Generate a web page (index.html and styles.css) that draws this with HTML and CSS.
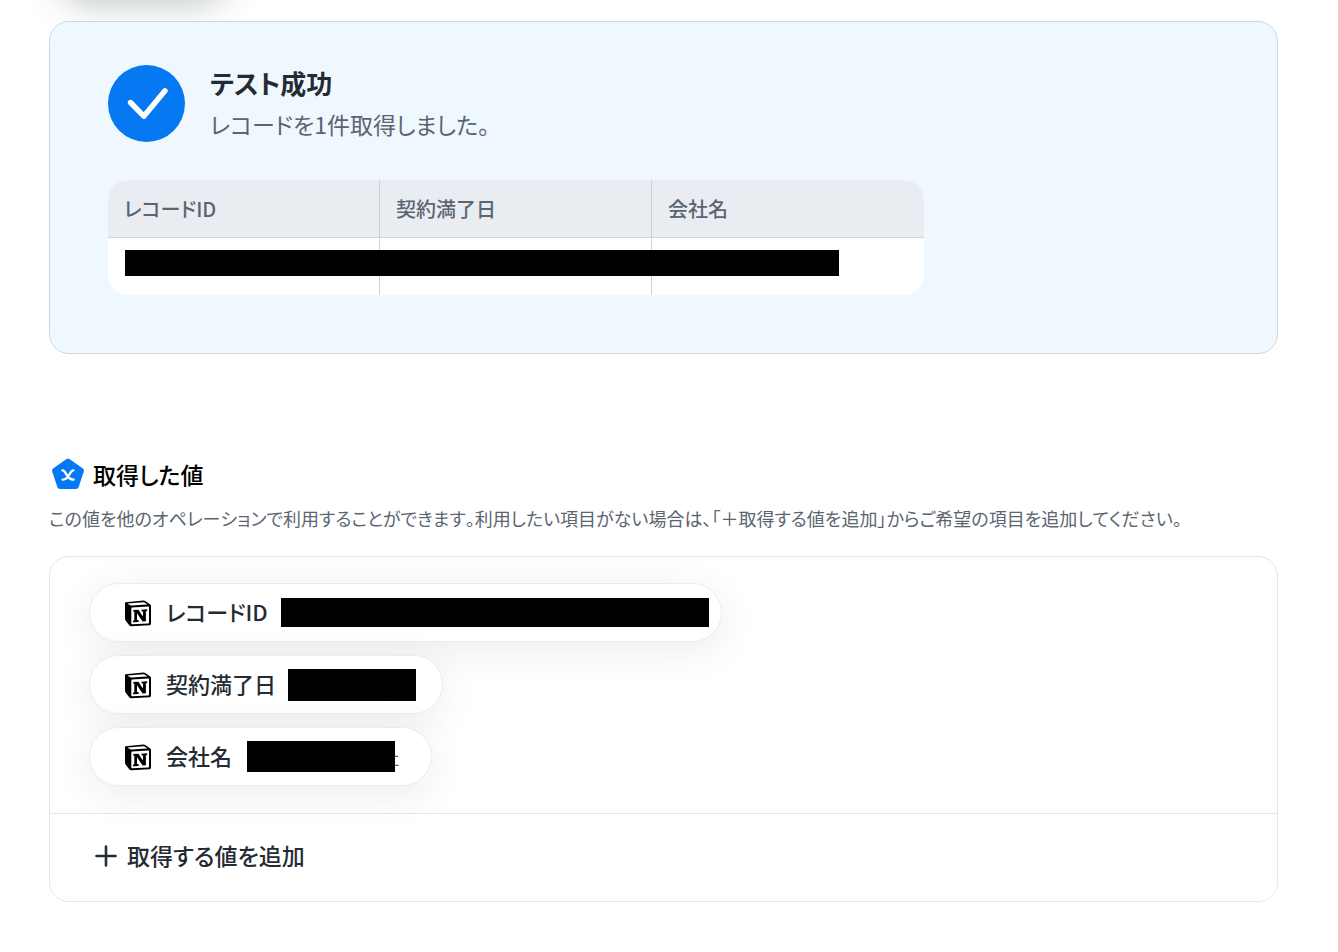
FILE: index.html
```html
<!DOCTYPE html>
<html lang="ja">
<head>
    <meta charset="UTF-8">
    <meta name="viewport" content="width=device-width, initial-scale=1.0">
    <title>テスト成功</title>
    <link rel="stylesheet" href="styles.css">
</head>
<body>
    <svg class="sprite" width="0" height="0" aria-hidden="true">
        <symbol id="notion" viewBox="0 0 28 28">
            <path d="M1.5 3.2 L19.5 1.6 Q20.6 1.5 21.6 2.2 L26.3 5.6 Q27 6.1 27 7 V24.6 Q27 26.2 25.4 26.3 L7.4 27.3 Q6 27.4 5.2 26.3 L1.8 21.8 Q1 20.8 1 19.6 V4.6 Q1 3.3 2.2 3.1 Z" fill="#000"/>
            <path d="M3.4 4.6 L19.3 3.3 Q20 3.2 20.6 3.6 L23.4 5.5 L7.4 6.5 Q6.5 6.6 5.8 6.1 Z" fill="#fff"/>
            <path d="M7.3 9.2 Q7.3 8.5 8 8.5 L24.3 7.5 Q25 7.5 25 8.2 V23.6 Q25 24.3 24.3 24.4 L8.1 25.3 Q7.3 25.3 7.3 24.6 Z" fill="#fff"/>
            <path d="M9.3 11.1 L14.4 10.8 L19 17.6 V12.6 L17.4 12.2 V10.7 L23.2 10.3 V11.8 L21.9 12.3 V22.2 L18.6 22.5 L13 14.2 V21.1 L14.7 21.5 V22.9 L9 23.2 V21.8 L10.3 21.3 V12.8 L9.3 12.5 Z" fill="#000"/>
        </symbol>
    </svg>

    <div class="page">
        <div class="tab-shadow"></div>

        <section class="result">
            <div class="result-head">
                <svg class="check" viewBox="0 0 77 77" aria-hidden="true">
                    <circle cx="38.5" cy="38.5" r="38.5" fill="#0578f2"/>
                    <path d="M22.5 37.5 L35.8 51.2 L57 25.8" fill="none" stroke="#fff" stroke-width="5.4" stroke-linecap="round" stroke-linejoin="round"/>
                </svg>
                <div>
                    <h1>テスト成功</h1>
                    <p class="message">レコードを1件取得しました。</p>
                </div>
            </div>
            <div class="table-wrap">
                <table>
                    <thead>
                        <tr><th>レコードID</th><th>契約満了日</th><th>会社名</th></tr>
                    </thead>
                    <tbody>
                        <tr><td></td><td></td><td></td></tr>
                    </tbody>
                </table>
                <div class="mask row-mask"></div>
            </div>
        </section>

        <section class="values">
            <h2>
                <svg class="logo" viewBox="0 0 34 34" aria-hidden="true">
                    <path d="M17 4 L30.5 13.5 L25.2 29.5 H8.8 L3.5 13.5 Z" fill="#0578f2" stroke="#0578f2" stroke-width="5" stroke-linejoin="round"/>
                    <path d="M11.4 13.4 C15.4 13 15 23 22.6 22.6 M22.4 13.4 C18.6 13 18.4 23 11.6 22.6" fill="none" stroke="#fff" stroke-width="2.4" stroke-linecap="round"/>
                </svg>
                取得した値
            </h2>
            <p class="note">この値を他のオペレーションで利用することができます。利用したい項目がない場合は、「＋取得する値を追加」からご希望の項目を追加してください。</p>

            <div class="panel">
                <ul class="pills">
                    <li class="pill pill-id">
                        <svg class="notion" aria-hidden="true"><use href="#notion"/></svg>
                        <span class="label">レコードID</span>
                        <span class="mask id-mask"></span>
                    </li>
                    <li class="pill pill-date">
                        <svg class="notion" aria-hidden="true"><use href="#notion"/></svg>
                        <span class="label">契約満了日</span>
                        <span class="mask date-mask"></span>
                    </li>
                    <li class="pill pill-company">
                        <svg class="notion" aria-hidden="true"><use href="#notion"/></svg>
                        <span class="label">会社名</span>
                        <span class="mask company-mask"></span>
                        <span class="value">社</span>
                    </li>
                </ul>
                <button type="button" class="add">
                    <svg class="plus" viewBox="0 0 22 22" aria-hidden="true">
                        <path d="M11 1.5 V20.5 M1.5 11 H20.5" stroke="#252b33" stroke-width="2.6" stroke-linecap="round"/>
                    </svg>
                    <span class="label">取得する値を追加</span>
                </button>
            </div>
        </section>
    </div>
</body>
</html>
```

FILE: styles.css
```css
* {
    box-sizing: border-box;
}

body {
    margin: 0;
    background: #fff;
    color: #252b33;
    font-family: "Noto Sans CJK JP", sans-serif;
    font-feature-settings: "palt";
    font-kerning: none;
}

h1, h2, p, ul {
    margin: 0;
    padding: 0;
}

.sprite {
    position: absolute;
}

.page {
    display: flow-root;
    padding: 0 60px 50px 49px;
}

/* bottom edge of the tab that is scrolled out above */
.tab-shadow {
    width: 168px;
    height: 60px;
    margin: -66px 0 27px 10px;
    border-radius: 30px;
    box-shadow: 0 8px 36px rgba(30, 50, 50, 0.3);
}

.mask {
    background: #000;
}

/* Test result */
.result {
    padding: 43px 58px 58px;
    background: #f0f8ff;
    border: 1px solid #cdd6df;
    border-radius: 20px;
}

.result-head {
    display: flex;
    align-items: center;
    gap: 25px;
    margin-bottom: 38px;
}

.check {
    flex: none;
    width: 77px;
    height: 77px;
}

h1 {
    margin-bottom: 5px;
    font-size: 26px;
    font-weight: 700;
    line-height: 36px;
}

.message {
    color: #5b6570;
    font-size: 23px;
    line-height: 36px;
}

.table-wrap {
    position: relative;
    max-width: 816px;
    overflow: hidden;
    border-radius: 20px;
}

table {
    width: 100%;
    table-layout: fixed;
    border-collapse: separate;
    border-spacing: 0;
    background: #fff;
}

th {
    height: 58px;
    padding: 0 16px;
    background: #e9edf2;
    border-bottom: 1px solid #cdd6df;
    color: #5b6570;
    font-size: 20px;
    font-weight: 500;
    text-align: left;
}

td {
    height: 57px;
}

th:not(:last-child),
td:not(:last-child) {
    border-right: 1px solid #cdd2d9;
}

.row-mask {
    position: absolute;
    top: 70px;
    left: 17px;
    right: 85px;
    height: 26px;
}

/* Values */
.values {
    margin-top: 100px;
}

h2 {
    display: flex;
    align-items: center;
    gap: 8px;
    padding-left: 2px;
    color: #000;
    font-size: 23px;
    font-weight: 500;
    line-height: 40px;
}

.logo {
    width: 34px;
    height: 34px;
}

.note {
    margin: 8px 0 22px;
    color: #5b6570;
    font-size: 18px;
    line-height: 32px;
}

.panel {
    overflow: hidden;
    border: 1px solid #e4e5e7;
    border-radius: 20px;
}

.pills {
    display: flex;
    flex-direction: column;
    align-items: flex-start;
    gap: 13px;
    padding: 26px 39px 27px;
    list-style: none;
}

.pill {
    display: flex;
    align-items: center;
    height: 59px;
    padding: 0 34px;
    background: #fff;
    border: 1px solid #e9ebf0;
    border-radius: 30px;
    box-shadow: 0 8px 40px rgba(0, 0, 0, 0.08);
    font-size: 22px;
    font-weight: 500;
    white-space: nowrap;
}

.pill-id {
    padding-right: 12px;
}

.pill-date {
    padding-right: 26px;
}

.pill-company {
    padding-right: 32px;
}

.label {
    padding-bottom: 3px;
}

.notion {
    width: 28px;
    height: 28px;
    margin-right: 14px;
}

.id-mask {
    width: 428px;
    height: 29px;
    margin-left: 13px;
}

.date-mask {
    width: 128px;
    height: 32px;
    margin-left: 12px;
}

.company-mask {
    z-index: 1;
    width: 148px;
    height: 31px;
    margin-left: 15px;
}

.value {
    margin-left: -14px;
    color: #5b6570;
    font-size: 18px;
    font-weight: 400;
}

.add {
    display: flex;
    align-items: center;
    gap: 10px;
    width: 100%;
    height: 88px;
    padding: 0 45px 3px;
    background: #fff;
    border: 0;
    border-top: 1px solid #e4e5e7;
    color: #252b33;
    font: inherit;
    font-size: 23px;
    font-weight: 500;
    cursor: pointer;
}

.plus {
    width: 22px;
    height: 22px;
}
```
